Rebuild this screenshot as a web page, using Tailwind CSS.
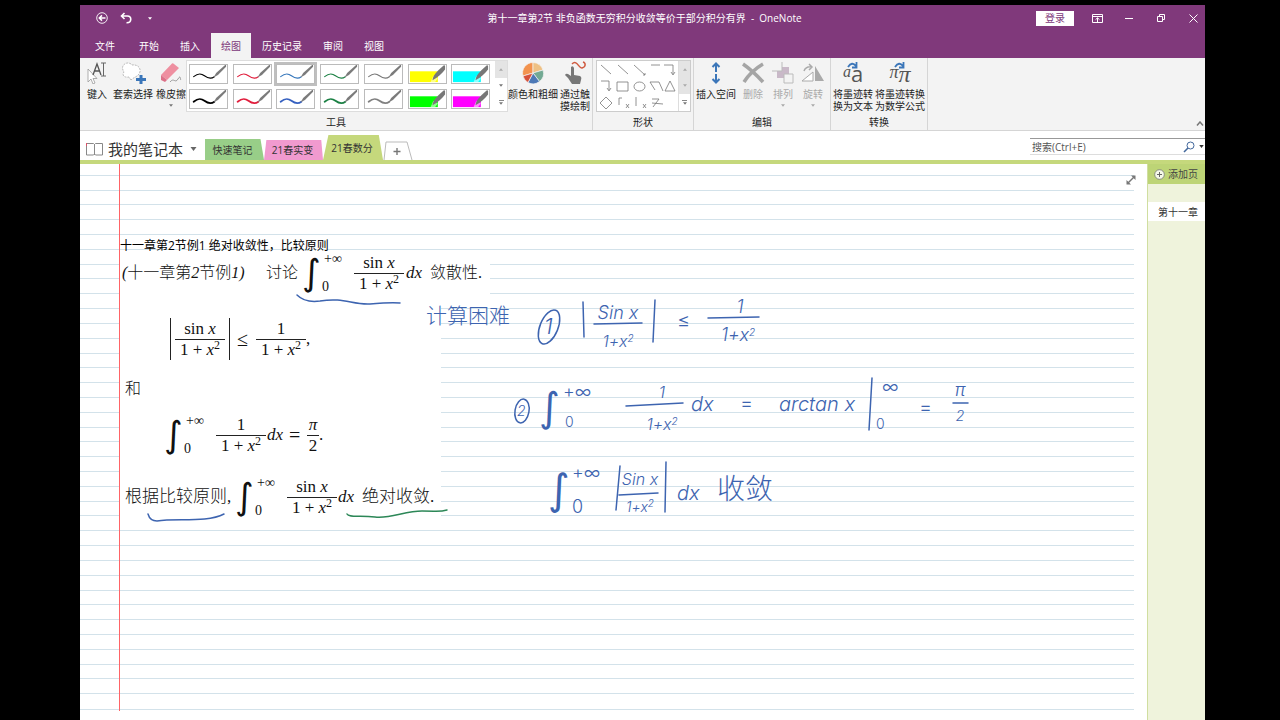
<!DOCTYPE html>
<html lang="zh-CN">
<head>
<meta charset="utf-8">
<title>第十一章第2节 - OneNote</title>
<script src="https://cdn.jsdelivr.net/npm/@tailwindcss/browser@4"></script>
</head>
<body class="bg-black font-['Open_Sans','Noto_Sans_CJK_SC',sans-serif] text-[10px] leading-3 text-[#333]">
<svg class="hidden" aria-hidden="true">
  <symbol id="pen" viewBox="0 0 39 20">
    <path d="M3 13C8 9 11 9 15 12S22 16 26 13" fill="none" stroke="currentColor" stroke-width="var(--w,1.2)" stroke-linecap="round"/>
    <path d="M25 14L28 9L38 0L39 0V2L30 11Z" fill="#7b7b7b"/>
  </symbol>
  <symbol id="hl" viewBox="0 0 39 20">
    <path d="M0 7H31V19H0Z" fill="currentColor"/>
    <path d="M23 19L26 12L31 15L28 19Z" fill="#fff" fill-opacity=".55"/>
    <path d="M25 17C26 11 28 9 38 0L39 1V5C35 10 31 14 25 17Z" fill="#777"/>
  </symbol>
  <symbol id="down" viewBox="0 0 6 4"><path d="M0 0H6L3 4Z" fill="currentColor"/></symbol>
</svg>

<div class="flex h-screen flex-col overflow-hidden pt-[5px] pr-[75px] pl-20">
  <header class="shrink-0 bg-[#80397b] text-white">
    <div class="relative flex h-[26px] items-center">
      <button aria-label="返回" class="ml-4"><svg class="size-3" viewBox="0 0 12 12" fill="none" stroke="#fff"><circle cx="6" cy="6" r="5.3" stroke-width=".9"/><path d="M9.500 6H3.500M6 3.400L3.300 6L6 8.600" stroke-width="1.500"/></svg></button>
      <button aria-label="撤销" class="ml-3"><svg class="size-3" viewBox="0 0 12 12" fill="none" stroke="#fff" stroke-width="1.600"><path d="M4.500 1L1.500 4L4.500 7M1.500 4H7.500C12 4 12 11 6.500 10.700"/></svg></button>
      <button aria-label="自定义快速访问工具栏" class="ml-4"><svg class="h-[3px] w-1"><use href="#down"/></svg></button>
      <h1 class="absolute inset-x-0 pl-1 text-center">第十一章第2节 非负函数无穷积分收敛等价于部分积分有界&nbsp; -&nbsp; OneNote</h1>
      <div class="relative ml-auto flex items-center">
        <button class="mr-[18px] h-[15px] w-[38px] bg-white text-[#80397b]">登录</button>
        <button aria-label="功能区显示选项" class="mr-[22px]"><svg class="h-[9px] w-[11px]" viewBox="0 0 11 9" fill="none" stroke="#fff"><path d="M.5.500H10.500V8.500H.5ZM.5 2.500H10.500M5.500 8V4M3.500 5.700L5.500 3.800L7.500 5.700"/></svg></button>
        <button aria-label="最小化" class="mr-6"><svg class="h-[9px] w-2" viewBox="0 0 8 9"><path d="M0 4.500H8" stroke="#fff"/></svg></button>
        <button aria-label="还原" class="mr-6"><svg class="size-2" viewBox="0 0 8 8" fill="none" stroke="#fff"><path d="M.5 2.500H5.500V7.500H.5ZM2.500 2V.5H7.500V5.500H6"/></svg></button>
        <button aria-label="关闭" class="mr-[7px]"><svg class="size-[9px]" viewBox="0 0 9 9"><path d="M.5.500L8.500 8.500M8.500.500L.5 8.500" stroke="#fff"/></svg></button>
      </div>
    </div>
    <nav class="flex h-[27px] items-end gap-px pl-[5px]">
      <button class="mr-[3px] h-[25px] px-[10px]">文件</button>
      <button class="h-[25px] px-[10px]">开始</button>
      <button class="h-[25px] px-[10px]">插入</button>
      <button class="h-[25px] bg-[#f3f3f3] px-[10px] text-[#80397b]">绘图</button>
      <button class="h-[25px] px-[10px]">历史记录</button>
      <button class="h-[25px] px-[10px]">审阅</button>
      <button class="h-[25px] px-[10px]">视图</button>
    </nav>
  </header>

  <section aria-label="绘图工具" class="relative flex h-[73px] shrink-0 border-b border-[#d5d5d5] bg-[#f3f3f3] text-[#222]">
    <div class="flex w-[513px] flex-col border-r border-[#d5d5d5]">
      <div class="flex h-[58px] items-start pt-[3px] pl-[5px]">
        <button class="w-6 pt-px"><svg class="mx-auto mb-1 h-[22px] w-5" viewBox="0 0 20 22"><path d="M1 7L1 20L4 17L6 22L8 21L6 16.500H10Z" fill="#fff" stroke="#999" stroke-width=".8"/><path d="M6 13L10 2L14 13M7.500 9H12.500" fill="none" stroke="#555" stroke-width="1.300"/><path d="M14 1H19M16.500 1V14M14 14H19" stroke="#666" fill="none"/></svg>键入</button>
        <button class="ml-[2px] w-11 pt-px"><svg class="mx-auto mb-1 h-[22px] w-7" viewBox="0 0 28 22"><path d="M12 18L10 15C4 16 3 12 5 10C0 3 9-2 13 3C20 2 23 8 20 12C18 15 15 15 12 18Z" fill="#fff" stroke="#aaa" stroke-width=".8" stroke-dasharray="2 1"/><path d="M22 13V22M17 17.500H27" stroke="#3b76b9" stroke-width="3"/></svg>套索选择</button>
        <button class="w-8 pt-px"><svg class="mx-auto mb-1 h-[22px] w-[22px]" viewBox="0 0 22 22"><path d="M1 13L12 1.500Q13 1 14 2L19 6L7 18Z" fill="#ee8fa0"/><path d="M1 13L7 18L5 20L1 18Z" fill="#dc7188"/><path d="M10 20C14 15 15 22 18 17S20 18 21 18" fill="none" stroke="#888" stroke-width=".8"/></svg>橡皮擦<svg class="mx-auto mt-1 h-[3px] w-1 text-[#777]"><use href="#down"/></svg></button>
        <div class="flex h-[50px] w-[320px] bg-white ring-1 ring-[#ddd]">
          <div class="grid grow grid-cols-7 content-start gap-y-[5px] pt-[3px] pl-[2px]">
            <button aria-label="黑色细笔" class="h-5 w-[39px] border border-[#bbb]"><svg class="size-full text-black"><use href="#pen"/></svg></button>
            <button aria-label="红色细笔" class="h-5 w-[39px] border border-[#bbb]"><svg class="size-full text-[#e11d3c]"><use href="#pen"/></svg></button>
            <button aria-label="蓝色细笔" class="h-5 w-[39px] border border-[#bbb] ring-2 ring-[#bfbfbf]"><svg class="size-full text-[#3576bb]"><use href="#pen"/></svg></button>
            <button aria-label="绿色细笔" class="h-5 w-[39px] border border-[#bbb]"><svg class="size-full text-[#1b8044]"><use href="#pen"/></svg></button>
            <button aria-label="灰色细笔" class="h-5 w-[39px] border border-[#bbb]"><svg class="size-full text-[#777]"><use href="#pen"/></svg></button>
            <button aria-label="黄色荧光笔" class="h-5 w-[39px] border border-[#bbb]"><svg class="size-full text-[#ffff00]"><use href="#hl"/></svg></button>
            <button aria-label="青色荧光笔" class="h-5 w-[39px] border border-[#bbb]"><svg class="size-full text-[#00ffff]"><use href="#hl"/></svg></button>
            <button aria-label="黑色粗笔" class="h-5 w-[39px] border border-[#bbb] [--w:2]"><svg class="size-full text-black"><use href="#pen"/></svg></button>
            <button aria-label="红色粗笔" class="h-5 w-[39px] border border-[#bbb] [--w:2]"><svg class="size-full text-[#e11d3c]"><use href="#pen"/></svg></button>
            <button aria-label="蓝色粗笔" class="h-5 w-[39px] border border-[#bbb] [--w:2]"><svg class="size-full text-[#3560c0]"><use href="#pen"/></svg></button>
            <button aria-label="绿色粗笔" class="h-5 w-[39px] border border-[#bbb] [--w:2]"><svg class="size-full text-[#1b8044]"><use href="#pen"/></svg></button>
            <button aria-label="灰色粗笔" class="h-5 w-[39px] border border-[#bbb] [--w:2]"><svg class="size-full text-[#808080]"><use href="#pen"/></svg></button>
            <button aria-label="绿色荧光笔" class="h-5 w-[39px] border border-[#bbb]"><svg class="size-full text-[#00ff00]"><use href="#hl"/></svg></button>
            <button aria-label="洋红荧光笔" class="h-5 w-[39px] border border-[#bbb]"><svg class="size-full text-[#ff00ff]"><use href="#hl"/></svg></button>
          </div>
          <div class="grid w-3 grid-rows-3 text-[#777]">
            <button aria-label="上一行" class="flex items-center justify-center bg-[#e4e4e4] text-[#aaa]"><svg class="h-[3px] w-1 rotate-180"><use href="#down"/></svg></button>
            <button aria-label="下一行" class="flex items-center justify-center"><svg class="h-[3px] w-1"><use href="#down"/></svg></button>
            <button aria-label="更多笔" class="flex flex-col items-center justify-center gap-px"><span class="h-px w-[5px] bg-[#888]"></span><svg class="h-[3px] w-1"><use href="#down"/></svg></button>
          </div>
        </div>
        <button class="w-[52px]"><svg class="mx-auto mb-1 h-[23px] w-[22px]" viewBox="-11 -12 22 23" stroke="#f3f3f3" stroke-width=".7"><path d="M0 0L-10 3A10.500 10.500 0 0 1 0-10.500Z" fill="#f2924e"/><path d="M0 0V-10.500A10.500 10.500 0 0 1 10-3Z" fill="#eec084"/><path d="M0 0L10-3A10.500 10.500 0 0 1 6.500 8.500Z" fill="#72a993"/><path d="M0 0L6.500 8.500A10.500 10.500 0 0 1-5 9.500Z" fill="#4d79b6"/><path d="M0 0L-5 9.500A10.500 10.500 0 0 1-10 3Z" fill="#d65039"/></svg>颜色和粗细</button>
        <button class="w-8"><svg class="mx-auto mb-1 h-[23px] w-6" viewBox="0 0 24 23"><path d="M8 6Q10 4 11 7V14L17 15Q19 16 18 19L17 23H9L5 17L2 14Q3 12 5 13L8 15Z" fill="#777"/><path d="M9 3C14-2 16 8 19 7C23 6 23 2 20 1" fill="none" stroke="#cf5b40" stroke-width="1.500"/></svg>通过触<br>摸绘制</button>
      </div>
      <h2 class="text-center">工具</h2>
    </div>
    <div class="flex w-[101px] flex-col border-r border-[#d5d5d5]">
      <div class="h-[58px] pt-[3px] pl-1">
        <div class="flex h-[50px] w-[93px] bg-white ring-1 ring-[#ccc]">
          <button aria-label="形状" class="grow"><svg class="h-[50px] w-20" viewBox="0 0 80 50" fill="none" stroke="#777" stroke-width=".8"><path d="M4 4L14 13M21 4L31 13M37 4L48 14M46 14H48V12M54 4H63M67 4H76V13M74 11L76 14L78 11M4 20H12V29M10 27L12 30L14 27M20 21H31V30H20ZM53 21H62L66 30M53 21L58 29M73 20L68 30H78ZM9 36L15 42L9 48L3 42ZM22 37V44M22 37H25M29 43L32 47M32 43L29 47M39 36V45M46 43L49 47M49 43L46 47M55 38H62L56 46M55 42L66 43"/><ellipse cx="42.500" cy="25.500" rx="5.500" ry="4.500"/></svg></button>
          <div class="grid w-3 grid-rows-3 border-l border-[#ddd] text-[#777]">
            <button aria-label="上一行形状" class="flex items-center justify-center bg-[#e4e4e4] text-[#aaa]"><svg class="h-[3px] w-1 rotate-180"><use href="#down"/></svg></button>
            <button aria-label="下一行形状" class="flex items-center justify-center bg-[#e4e4e4] text-[#aaa]"><svg class="h-[3px] w-1"><use href="#down"/></svg></button>
            <button aria-label="更多形状" class="flex flex-col items-center justify-center gap-px"><span class="h-px w-[5px] bg-[#888]"></span><svg class="h-[3px] w-1"><use href="#down"/></svg></button>
          </div>
        </div>
      </div>
      <h2 class="text-center">形状</h2>
    </div>
    <div class="flex w-[137px] flex-col border-r border-[#d5d5d5]">
      <div class="flex h-[58px] items-start pt-1 text-[#aaa]">
        <button class="w-11 text-[#222]"><svg class="mx-auto mb-1 h-[22px] w-3" viewBox="0 0 12 22" fill="none" stroke="#3b76b9" stroke-width="2"><path d="M6 10V1.500M2.500 5L6 1.500L9.500 5M6 12V20.500M2.500 17L6 20.500L9.500 17"/></svg>插入空间</button>
        <button class="ml-[3px] w-6"><svg class="mb-1 h-[22px] w-6" viewBox="0 0 24 22"><path d="M2 2Q12 9 22 20M22 2Q10 9 3 20" fill="none" stroke="#a5a5a5" stroke-width="3.500"/></svg>删除</button>
        <button class="ml-[6px] w-6"><svg class="mb-1 h-[22px] w-6" viewBox="0 0 24 22"><path d="M6 5H18V16H6Z" fill="#c9b9c8"/><path d="M11 0V9H1M13 21V12H22V21Z" fill="#f3f3f3" stroke="#bbb"/></svg>排列<svg class="mx-auto mt-1 h-[3px] w-1"><use href="#down"/></svg></button>
        <button class="ml-[6px] w-6"><svg class="mb-1 h-[22px] w-6" viewBox="0 0 24 22"><path d="M14 4V19H23Z" fill="#aaa"/><path d="M12 10L1 19H12Z" fill="#fff" stroke="#aaa"/><path d="M3 9Q5 4 11 5M8 2L11 5L8 8" fill="none" stroke="#aaa" stroke-width="1.500"/></svg>旋转<svg class="mx-auto mt-1 h-[3px] w-1"><use href="#down"/></svg></button>
      </div>
      <h2 class="text-center">编辑</h2>
    </div>
    <div class="flex w-[97px] flex-col border-r border-[#d5d5d5]">
      <div class="flex h-[58px] items-start pt-1 pl-px">
        <button class="w-[42px]"><span class="relative mb-1 flex h-[22px] items-end justify-center text-[#555]"><i class="mb-1 font-['Liberation_Serif'] text-base leading-4">a</i><span class="text-[22px] leading-[22px]">a</span><svg class="absolute top-0 left-[15px] h-[9px] w-3" viewBox="0 0 12 9" fill="none" stroke="#3b76b9" stroke-width="1.800"><path d="M1 5Q5-1 9 4M9.500 0V5.500H5"/></svg></span>将墨迹转<br>换为文本</button>
        <button class="w-[52px]"><span class="relative mb-1 flex h-[22px] items-end justify-center font-['Liberation_Serif'] text-[#555]"><i class="mb-1 text-lg leading-4">π</i><i class="text-2xl leading-5">π</i><svg class="absolute top-0 left-5 h-[9px] w-3" viewBox="0 0 12 9" fill="none" stroke="#3b76b9" stroke-width="1.800"><path d="M1 5Q5-1 9 4M9.500 0V5.500H5"/></svg></span>将墨迹转换<br>为数学公式</button>
      </div>
      <h2 class="text-center">转换</h2>
    </div>
    <button aria-label="折叠功能区" class="mt-auto mr-px mb-1 ml-auto"><svg class="h-[5px] w-2" viewBox="0 0 8 5" fill="none" stroke="#777" stroke-width="1.500"><path d="M1 4.500L4 1L7 4.500"/></svg></button>
  </section>

  <div class="flex h-[33px] shrink-0 items-end border-b-4 border-[#c5d87c] bg-white">
    <button class="flex h-full items-center pt-[7px] pl-[6px] text-[15px] leading-5 text-[#333]"><svg class="mr-[5px] h-[14px] w-[17px]" viewBox="0 0 17 14" fill="none" stroke="#888"><path d="M.5 1.500H7.500L8.500 2.500L9.500 1.500H16.500V13H9.500L8.500 12L7.500 13H.5ZM8.500 2V13"/><path d="M.5 1V4" stroke="#e0526a"/></svg>我的笔记本<svg class="ml-[7px] h-1 w-[7px] text-[#666]"><use href="#down"/></svg></button>
    <button class="ml-2 h-[21px] w-[59px] bg-[#98ce88] pr-1 [clip-path:polygon(0_0,94%_0,100%_100%,0_100%)]">快速笔记</button>
    <button class="h-[20px] w-[59px] bg-[#f19acf] pr-[2px] [clip-path:polygon(4%_0,97%_0,100%_100%,0_100%)]">21春实变</button>
    <button class="h-[25px] w-[60px] bg-[#c5d87c] pr-[2px] [clip-path:polygon(9%_0,93%_0,100%_100%,0_100%)]">21春数分</button>
    <button aria-label="创建新分区" class="h-5 w-[30px]"><svg class="h-5 w-[30px]" viewBox="0 0 30 20" fill="none"><path d="M1 20L3 2H24L29 20" stroke="#bbb"/><path d="M14 8V15M10.500 11.500H17.500" stroke="#777" stroke-width="1.400"/></svg></button>
    <div class="mb-[5px] ml-auto flex h-[17px] w-[175px] items-center border-t border-b border-t-[#999] border-b-[#ddd]">
      <input aria-label="搜索" placeholder="搜索(Ctrl+E)" class="min-w-0 grow pl-[2px] outline-none placeholder:text-[#555]">
      <button aria-label="搜索" class="mr-1"><svg class="size-3" viewBox="0 0 12 12" fill="none" stroke="#43689c"><circle cx="7.500" cy="4.500" r="3.500"/><path d="M5 7L1 11" stroke-width="1.600"/></svg></button>
      <button aria-label="搜索范围" class="mr-px"><svg class="h-[3px] w-[5px]"><use href="#down"/></svg></button>
    </div>
  </div>

  <div class="flex min-h-0 grow">
    <main class="relative min-w-0 grow overflow-hidden bg-white">
      <div aria-hidden="true" class="absolute inset-x-0 top-[-3px] bottom-[10px] mr-[13px] grid grid-cols-1 auto-rows-fr divide-y divide-[#d3e2ea] border-b border-[#d3e2ea]">
        <div></div><div></div><div></div><div></div><div></div><div></div><div></div><div></div><div></div><div></div><div></div><div></div><div></div><div></div><div></div><div></div><div></div><div></div><div></div><div></div><div></div><div></div><div></div><div></div><div></div><div></div><div></div><div></div><div></div><div></div><div></div><div></div><div></div><div></div><div></div><div></div><div></div>
      </div>

      <!-- Typeset notes -->
      <div aria-hidden="true" class="absolute top-[88px] left-10 h-12 w-[370px] bg-white"></div>
      <div aria-hidden="true" class="absolute top-[136px] left-10 h-[225px] w-[321px] bg-white"></div>
      <div aria-hidden="true" class="absolute top-0 bottom-[9px] left-[39px] w-px bg-red-400"></div>
      <button aria-label="全屏视图" class="absolute top-[11px] right-[11px]"><svg class="size-[10px]" viewBox="0 0 10 10"><path d="M2 8L8 2" stroke="#777" stroke-width="1.500"/><path d="M5 .5H9.500V5ZM.5 5V9.500H5Z" fill="#777"/></svg></button>
      <p class="absolute top-[75px] left-10 text-xs leading-[14px] whitespace-nowrap text-black">十一章第2节例1 绝对收敛性，比较原则</p>

      <div class="absolute top-[87px] left-[42px] flex h-11 items-center font-['Liberation_Serif','Noto_Sans_CJK_SC',serif] text-[17px] leading-5 font-light whitespace-nowrap text-[#111]">
        <p class="w-36 text-base"><i>(</i>十一章第<i>2</i>节例<i>1)</i></p>
        <p class="w-9 text-base">讨论</p>
        <i class="w-5 font-['DejaVu_Sans'] text-4xl leading-11 font-extralight">∫</i>
        <span class="flex h-10 w-8 flex-col justify-between text-sm leading-3"><span class="pl-[2px]">+∞</span><span>0</span></span>
        <span class="flex w-[50px] flex-col text-center"><span class="border-b border-[#222]">sin <i>x</i></span><span>1 + <i>x</i><sup class="text-xs leading-none">2</sup></span></span>
        <i class="ml-[2px]">dx</i>
        <p class="ml-2 text-base">敛散性.</p>
      </div>

      <div class="absolute top-[153px] left-[90px] flex h-11 items-center font-['Liberation_Serif',serif] text-[17px] leading-5 whitespace-nowrap text-[#111]">
        <span class="h-[42px] w-px bg-[#222]"></span>
        <span class="mx-1 flex w-[50px] flex-col text-center"><span class="border-b border-[#222]">sin <i>x</i></span><span>1 + <i>x</i><sup class="text-xs leading-none">2</sup></span></span>
        <span class="h-[42px] w-px bg-[#222]"></span>
        <span class="mx-[7px] w-3 text-xl">≤</span>
        <span class="flex w-[50px] flex-col text-center"><span class="border-b border-[#222]">1</span><span>1 + <i>x</i><sup class="text-xs leading-none">2</sup></span></span>
        <span>,</span>
      </div>

      <p class="absolute top-[213px] left-[45px] font-['Noto_Sans_CJK_SC',sans-serif] text-base leading-5 font-light text-[#111]">和</p>

      <div class="absolute top-[249px] left-[84px] flex h-11 items-center font-['Liberation_Serif',serif] text-[17px] leading-5 whitespace-nowrap text-[#111]">
        <i class="w-5 font-['DejaVu_Sans'] text-4xl leading-11 font-extralight">∫</i>
        <span class="flex h-10 w-8 flex-col justify-between text-sm leading-3"><span class="pl-[2px]">+∞</span><span>0</span></span>
        <span class="flex w-[50px] flex-col text-center"><span class="border-b border-[#222]">1</span><span>1 + <i>x</i><sup class="text-xs leading-none">2</sup></span></span>
        <i class="ml-px">dx</i>
        <span class="mx-[6px] w-3 text-xl">=</span>
        <span class="flex w-3 flex-col text-center"><i class="border-b border-[#222]">π</i><span>2</span></span>
        <span>.</span>
      </div>

      <div class="absolute top-[311px] left-[45px] flex h-11 items-center font-['Liberation_Serif','Noto_Sans_CJK_SC',serif] text-[17px] leading-5 font-light whitespace-nowrap text-[#111]">
        <p class="w-[110px]">根据比较原则,</p>
        <i class="w-5 font-['DejaVu_Sans'] text-4xl leading-11 font-extralight">∫</i>
        <span class="flex h-10 w-8 flex-col justify-between text-sm leading-3"><span class="pl-[2px]">+∞</span><span>0</span></span>
        <span class="flex w-[50px] flex-col text-center"><span class="border-b border-[#222]">sin <i>x</i></span><span>1 + <i>x</i><sup class="text-xs leading-none">2</sup></span></span>
        <i class="ml-px">dx</i>
        <p class="ml-2">绝对收敛.</p>
      </div>

      <!-- Ink strokes: underlines, circles, rules -->
      <svg aria-hidden="true" class="absolute top-0 left-0 h-[400px] w-[900px]" viewBox="80 164 900 400" fill="none" stroke="#3d64b0" stroke-width="1.500" stroke-linecap="round">
        <path d="M297 295Q305 303 320 301C344 297 352 305 370 304S390 302 400 303"/>
        <path d="M148 514Q150 521 157 521C177 518 207 523 224 514"/>
        <path d="M347 514C349 518 360 515 375 517S405 511 422 511S440 512 447 510" stroke="#2c8757"/>
        <ellipse cx="549" cy="327" rx="9" ry="18" transform="rotate(22 549 327)"/>
        <ellipse cx="522" cy="411" rx="7" ry="12" transform="rotate(10 522 411)"/>
        <path d="M583 302L584 337M655 300L653 342M594 324L642 323M708 318L759 317"/>
        <path d="M626 406L683 403M872 378L869 430M953 403H968"/>
        <path d="M620 466L616 510M666 462L665 512M619 495L658 493"/>
      </svg>

      <!-- Handwritten notes -->
      <div class="font-['Inter','Noto_Sans_CJK_SC',sans-serif] font-light whitespace-nowrap text-[#3d64b0]">
        <p class="absolute top-[140px] left-[346px] text-[21px] leading-6">计算困难</p>
        <i class="absolute top-[150px] left-[464px] text-[22px] leading-6">1</i>
        <div class="absolute top-[137px] left-[512px] flex w-[52px] flex-col items-center gap-1 text-lg leading-6 italic"><span>Sin x</span><span class="text-base leading-6">1+x<sup class="text-[10px] leading-none">2</sup></span></div>
        <span class="absolute top-[144px] left-[597px] text-xl leading-6">≤</span>
        <div class="absolute top-[131px] left-[628px] flex w-[60px] flex-col items-center gap-1 text-lg leading-6 italic"><span class="pl-1">1</span><span>1+x<sup class="text-[10px] leading-none">2</sup></span></div>

        <i class="absolute top-[235px] left-[437px] text-sm leading-6">2</i>
        <div class="absolute top-[218px] left-[459px] flex h-[50px] items-center">
          <i class="w-6 font-['DejaVu_Sans'] text-[40px] leading-[50px] font-extralight">∫</i>
          <span class="flex h-[50px] w-9 flex-col justify-between text-lg leading-5"><span>+∞</span><span class="pl-[2px] text-sm">0</span></span>
        </div>
        <div class="absolute top-[216px] left-[546px] flex w-[60px] flex-col items-center gap-2 text-base leading-6 italic"><span class="pl-3">1</span><span class="pl-3">1+x<sup class="text-[10px] leading-none">2</sup></span></div>
        <i class="absolute top-[228px] left-[611px] text-xl leading-6">dx</i>
        <span class="absolute top-[227px] left-[660px] text-xl leading-6">=</span>
        <i class="absolute top-[228px] left-[699px] text-xl leading-6">arctan x</i>
        <span class="absolute top-[213px] left-[802px] text-lg leading-5">∞</span>
        <span class="absolute top-[250px] left-[796px] text-sm leading-5">0</span>
        <span class="absolute top-[231px] left-[839px] text-xl leading-6">=</span>
        <div class="absolute top-[216px] left-[870px] flex w-5 flex-col items-center gap-1 text-lg leading-5 italic"><span>π</span><span class="text-sm leading-6">2</span></div>

        <div class="absolute top-[299px] left-[468px] flex h-[54px] items-center">
          <i class="w-6 font-['DejaVu_Sans'] text-[42px] leading-[54px] font-extralight">∫</i>
          <span class="flex h-[54px] w-9 flex-col justify-between text-lg leading-5"><span>+∞</span><span>0</span></span>
        </div>
        <div class="absolute top-[303px] left-[537px] flex w-[46px] flex-col items-center gap-1 text-base leading-6 italic"><span>Sin x</span><span class="text-sm leading-6">1+x<sup class="text-[10px] leading-none">2</sup></span></div>
        <i class="absolute top-[317px] left-[597px] text-xl leading-6">dx</i>
        <p class="absolute top-[309px] left-[637px] text-[28px] leading-8">收敛</p>
      </div>
    </main>

    <aside aria-label="页面" class="w-[58px] shrink-0 border-l border-[#d0dea0] bg-[#eff3dc]">
      <button class="flex h-5 w-full items-center gap-[3px] bg-[#bdd476] pl-[6px] text-[#444]"><svg class="size-[11px]" viewBox="0 0 11 11" fill="none"><circle cx="5.500" cy="5.500" r="4.800" fill="#f5f9e8" stroke="#777" stroke-width=".8"/><path d="M5.500 3V8M3 5.500H8" stroke="#666"/></svg>添加页</button>
      <button class="mt-[18px] block h-[19px] w-full bg-white pl-[10px] text-left">第十一章</button>
    </aside>
  </div>
</div>
</body>
</html>
